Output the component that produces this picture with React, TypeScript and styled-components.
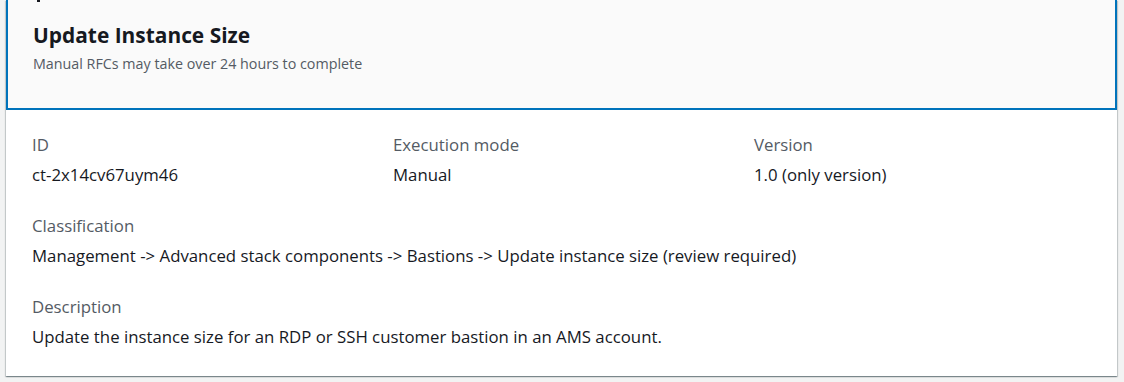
import React from "react";
import styled, { createGlobalStyle } from "styled-components";

const GlobalStyle = createGlobalStyle`
  html, body {
    margin: 0;
    padding: 0;
    background: #f2f3f3;
    font-family: "Open Sans", "Noto Sans", Arial, sans-serif;
    color: #16191f;
  }
  * { box-sizing: border-box; }
`;

const Page = styled.div`
  width: 1124px;
  height: 382px;
  overflow: hidden;
  padding: 0 7px 0 6px;
`;

const Card = styled.section`
  background: #ffffff;
  box-shadow: 0 1px 1px 0 rgba(0, 28, 36, 0.3), 1px 1px 1px 0 rgba(0, 28, 36, 0.15),
    -1px 1px 1px 0 rgba(0, 28, 36, 0.15);
`;

const Header = styled.header`
  background: #fafafa;
  border: 2px solid #0073bb;
  border-top: none;
  height: 110px;
  padding: 0 24px 0 25px;
  display: flex;
  flex-direction: column;
`;

const Marker = styled.span`
  display: block;
  width: 3px;
  height: 2px;
  margin-left: 4px;
  background: #16191f;
`;

const Title = styled.h2`
  margin: 19px 0 0;
  font-size: 20.9px;
  line-height: 29px;
  font-weight: 700;
  color: #16191f;
`;

const Subtitle = styled.p`
  margin: 4px 0 0;
  font-size: 14.3px;
  line-height: 20px;
  color: #545b64;
`;

const Body = styled.div`
  padding: 24px 20px 28px 26px;
  display: flex;
  flex-direction: column;
  gap: 29px;
`;

const Row = styled.div<{ $cols: number }>`
  display: grid;
  grid-template-columns: ${(p) => (p.$cols === 1 ? "1fr" : `repeat(${p.$cols}, 361px)`)};
`;

const Field = styled.div`
  display: flex;
  flex-direction: column;
  gap: 8px;
`;

const Label = styled.div`
  font-size: 16.8px;
  line-height: 22px;
  color: #545b64;
`;

const Value = styled.div`
  font-size: 16.8px;
  line-height: 22px;
  color: #16191f;
`;

const Item = ({ label, value }: { label: string; value: string }) => (
  <Field>
    <Label>{label}</Label>
    <Value>{value}</Value>
  </Field>
);

export default function App() {
  return (
    <>
      <GlobalStyle />
      <Page>
        <Card>
          <Header>
            <Marker />
            <Title>Update Instance Size</Title>
            <Subtitle>Manual RFCs may take over 24 hours to complete</Subtitle>
          </Header>
          <Body>
            <Row $cols={3}>
              <Item label="ID" value="ct-2x14cv67uym46" />
              <Item label="Execution mode" value="Manual" />
              <Item label="Version" value="1.0 (only version)" />
            </Row>
            <Row $cols={1}>
              <Item
                label="Classification"
                value="Management -> Advanced stack components -> Bastions -> Update instance size (review required)"
              />
            </Row>
            <Row $cols={1}>
              <Item
                label="Description"
                value="Update the instance size for an RDP or SSH customer bastion in an AMS account."
              />
            </Row>
          </Body>
        </Card>
      </Page>
    </>
  );
}
